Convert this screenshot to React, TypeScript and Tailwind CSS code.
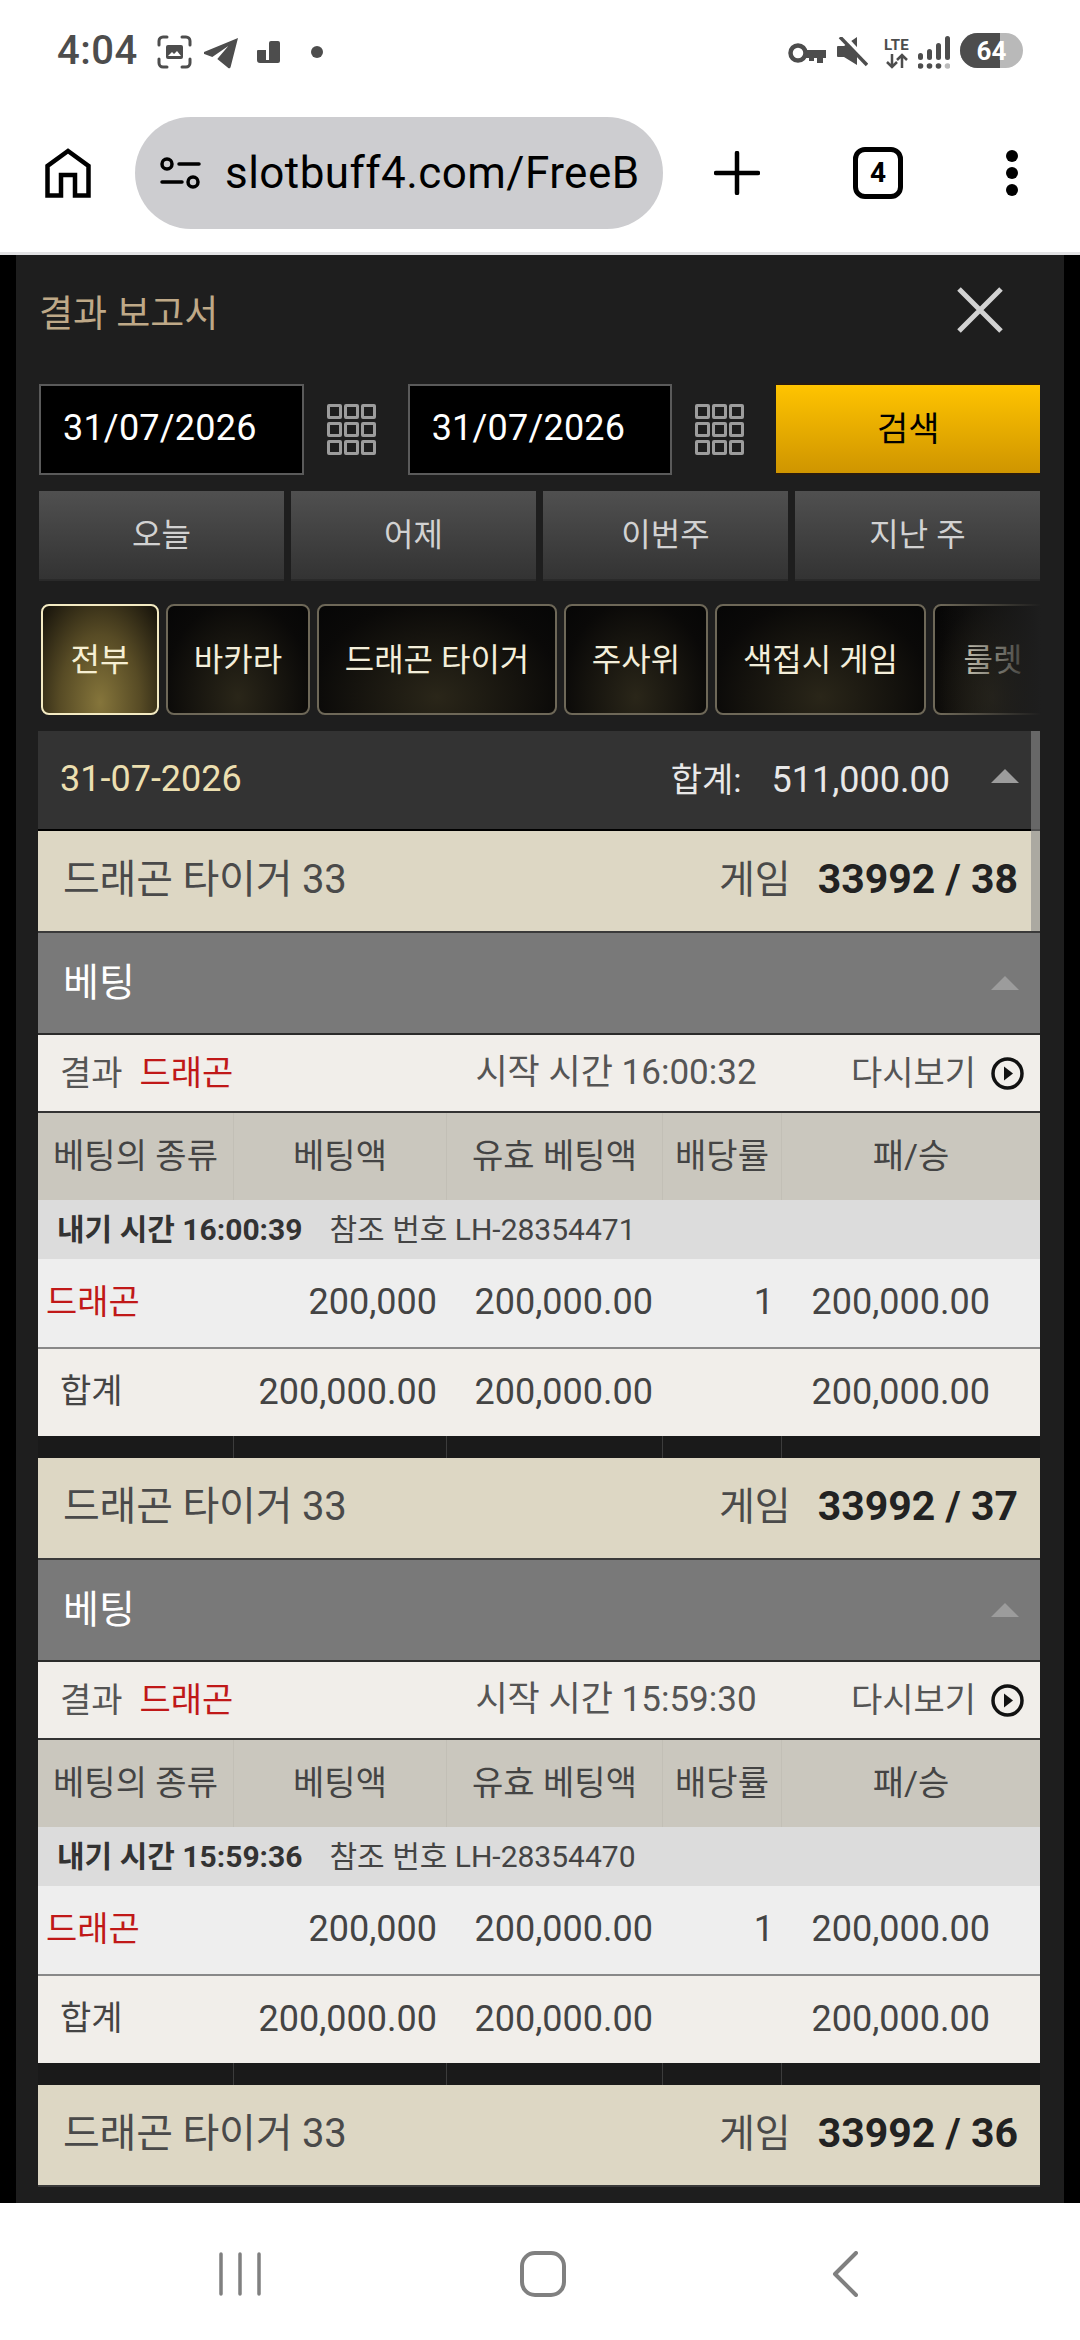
const groups = [
  { round: '33992 / 38', start: '16:00:32', bet: '16:00:39', ref: 'LH-28354471', open: true },
  { round: '33992 / 37', start: '15:59:30', bet: '15:59:36', ref: 'LH-28354470', open: true },
  { round: '33992 / 36', start: '', bet: '', ref: '', open: false },
];

const columns = 'grid grid-cols-[196px_213px_216px_119px_258px]';

function StatusBar() {
  return (
    <div className="h-[100px] flex items-start pt-[33px] pl-[57px] pr-[57px] text-[#4d4d4d] bg-white">
      <span className="text-[40px] leading-[36px] font-medium w-[100px] tracking-[0.5px]">4:04</span>
      <svg className="w-[35px] h-[34px] mt-[2px]" viewBox="0 0 35 34" fill="none" stroke="currentColor" strokeWidth="3" strokeLinecap="round">
        <path d="M2 10V6a4 4 0 0 1 4-4h4M25 2h4a4 4 0 0 1 4 4v4M33 24v4a4 4 0 0 1-4 4h-4M10 32H6a4 4 0 0 1-4-4v-4" />
        <rect x="9" y="10" width="17" height="14" rx="2" fill="currentColor" stroke="none" />
        <path d="M11 21l4-4 2 2 3-3 4 5z" fill="#fff" stroke="none" />
      </svg>
      <svg className="w-[35px] h-[31px] mt-[5px] ml-[12px]" viewBox="0 0 35 31" fill="currentColor">
        <path d="M34 0 0 14c-1 .6-1 1.6.3 2l8 3 16-11-11 13 11 9c1 .6 2 0 2.300-1z" />
      </svg>
      <svg className="w-[23px] h-[22px] mt-[8px] ml-[18px]" viewBox="0 0 23 22" fill="currentColor">
        <path d="M12 2a2 2 0 0 1 2-2h7a2 2 0 0 1 2 2v18a2 2 0 0 1-2 2H3a3 3 0 0 1-3-3V10a1 1 0 0 1 1-1h8v10h3z" />
      </svg>
      <span className="w-[12px] h-[12px] rounded-full bg-[#4d4d4d] mt-[13px] ml-[31px]" />
      <span className="flex-1" />
      <svg className="w-[38px] h-[20px] mt-[10px]" viewBox="0 0 38 20" fill="none" stroke="currentColor">
        <circle cx="10" cy="10" r="7.500" strokeWidth="4.500" />
        <path d="M17 7h21v8h-3v5h-6v-5h-3v3h-5v-3h-4z" fill="currentColor" stroke="none" />
      </svg>
      <svg className="w-[31px] h-[30px] mt-[4px] ml-[11px]" viewBox="0 0 31 30" fill="currentColor">
        <path d="M0 10a1 1 0 0 1 1-1h6L20 0v28L7 20H1a1 1 0 0 1-1-1z" />
        <path d="M6 -2 32 26" stroke="#fff" strokeWidth="4" fill="none" />
        <path d="M3 0 30 28" stroke="currentColor" strokeWidth="3.500" fill="none" />
      </svg>
      <div className="w-[31px] h-[33px] mt-[4px] ml-[13px] flex flex-col items-center">
        <span className="text-[15px] leading-[16px] font-bold tracking-[0.2px]">LTE</span>
        <svg className="w-[24px] h-[16px]" viewBox="0 0 24 16" fill="none" stroke="currentColor" strokeWidth="2.500">
          <path d="M7 1v13M2 9l5 5 5-5M17 15V2M12 7l5-5 5 5" />
        </svg>
      </div>
      <svg className="w-[32px] h-[33px] mt-[3px] ml-[6px]" viewBox="0 0 32 33" fill="currentColor">
        <rect x="0" y="17" width="5" height="7" rx="2.500" />
        <rect x="9" y="13" width="5" height="11" rx="2.500" />
        <rect x="18" y="7" width="5" height="17" rx="2.500" />
        <rect x="27" y="0" width="5" height="24" rx="2.500" />
        <circle cx="2.500" cy="30" r="2.800" />
        <circle cx="11.500" cy="30" r="2.800" />
        <circle cx="20.500" cy="30" r="2.800" />
        <circle cx="29.500" cy="30" r="2.800" fill="#bbb" />
      </svg>
      <div className="relative w-[63px] h-[35px] ml-[10px] rounded-full overflow-hidden bg-[#b9b9b9] flex items-center justify-center">
        <span className="absolute left-0 top-0 bottom-0 w-[40px] bg-[#4d4d4d]" />
        <span className="relative text-white text-[26px] leading-none font-bold">64</span>
      </div>
    </div>
  );
}

function Toolbar() {
  return (
    <div className="h-[155px] bg-white border-b-[3px] border-[#e2e2e4] flex items-start pt-[17px]">
      <svg className="w-[46px] h-[50px] ml-[45px] mt-[31px]" viewBox="0 0 46 50" fill="none" stroke="#000" strokeWidth="4.500">
        <path d="M2.500 47.500V18L23 3l20.500 15v29.500H30V27H16v20.500z" strokeLinejoin="miter" />
      </svg>
      <div className="w-[528px] h-[112px] ml-[44px] rounded-full bg-[#cdcdd0] flex items-center pl-[25px] overflow-hidden">
        <svg className="w-[41px] h-[33px] shrink-0" viewBox="0 0 41 33" fill="none" stroke="#000" strokeWidth="3.500" strokeLinecap="round">
          <circle cx="7" cy="7" r="5" />
          <path d="M19 7h20M2 25h20" />
          <circle cx="33" cy="25" r="5" />
        </svg>
        <span className="ml-[24px] text-[44px] leading-none text-black whitespace-nowrap tracking-[0.45px]">slotbuff4.com/FreeB</span>
      </div>
      <svg className="w-[46px] h-[44px] ml-[51px] mt-[34px]" viewBox="0 0 46 44" fill="none" stroke="#000" strokeWidth="4.500" strokeLinecap="round">
        <path d="M23 2v40M2 22h42" />
      </svg>
      <div className="w-[50px] h-[52px] ml-[93px] mt-[30px] rounded-[12px] border-[5px] border-black flex items-center justify-center text-[28px] font-bold leading-none text-black">4</div>
      <div className="ml-[103px] mt-[33px] flex flex-col gap-[5px]">
        <span className="w-[12px] h-[12px] rounded-full bg-black" />
        <span className="w-[12px] h-[12px] rounded-full bg-black" />
        <span className="w-[12px] h-[12px] rounded-full bg-black" />
      </div>
    </div>
  );
}

function GridIcon() {
  return (
    <div className="grid grid-cols-3 gap-x-[2px] gap-y-[3px] w-[49px] shrink-0">
      {Array.from({ length: 9 }).map((_, i) => (
        <span key={i} className="h-[15px] rounded-[2px] border-[3px] border-[#9c9c9c]" />
      ))}
    </div>
  );
}

function Triangle() {
  return <span className="w-0 h-0 border-x-[14px] border-x-transparent border-b-[14px] border-b-[#9c9c9c]" />;
}

function GameRow({ round }: { round: string }) {
  return (
    <div className="h-[102px] bg-[#ddd7c4] border-b-2 border-[#3a3a3a] flex items-center pl-[25px] pr-[22px] pb-[2px]">
      <span className="text-[40px] text-[#4a4a4a] tracking-[-0.2px]">드래곤 타이거 33</span>
      <span className="flex-1" />
      <span className="text-[39px] text-[#4a4a4a]">게임</span>
      <span className="ml-[27px] text-[41px] font-bold text-[#222]">{round}</span>
    </div>
  );
}

function Group({ round, start, bet, ref, open }: (typeof groups)[number]) {
  return (
    <div>
      <GameRow round={round} />
      {open && (
        <>
          <div className="h-[102px] bg-[#797979] border-b-2 border-[#2b2b2b] flex items-center justify-between pl-[25px] pr-[21px]">
            <span className="text-[39px] text-white">베팅</span>
            <Triangle />
          </div>
          <div className="h-[78px] bg-[#f1eeea] border-b-2 border-[#333] flex items-center pl-[22px] pr-[16px] text-[34px] text-[#555]">
            <span>결과</span>
            <span className="ml-[17px] text-[#c01818]">드래곤</span>
            <span className="ml-[242px] text-[35px]">시작 시간 {start}</span>
            <span className="flex-1" />
            <span>다시보기</span>
            <svg className="w-[33px] h-[33px] ml-[15px]" viewBox="0 0 33 33" fill="none">
              <circle cx="16.500" cy="16.500" r="14.500" stroke="#111" strokeWidth="3.500" />
              <path d="M13 9.500 22 16.500 13 23.500z" fill="#111" />
            </svg>
          </div>
          <div className={`${columns} h-[87px] bg-[#cac7be] text-[34px] text-[#444]`}>
            {['베팅의 종류', '베팅액', '유효 베팅액', '배당률', '패/승'].map((label, i) => (
              <div key={label} className={`flex items-center justify-center whitespace-nowrap ${i < 4 ? 'border-r border-[#c2bfb6]' : ''}`}>
                {label}
              </div>
            ))}
          </div>
          <div className="h-[59px] bg-[#dcdcdc] flex items-center pl-[19px] text-[30px] text-[#444]">
            <span className="font-bold text-[#333]">내기 시간 {bet}</span>
            <span className="ml-[27px]">참조 번호 {ref}</span>
          </div>
          <div className={`${columns} h-[90px] bg-[#eeeeee] border-b-2 border-[#888] text-[36px] text-[#444] pb-[2px]`}>
            <div className="flex items-center pl-[8px] text-[34px] text-[#c01818]">드래곤</div>
            <div className="flex items-center justify-end pr-[10px]">200,000</div>
            <div className="flex items-center justify-end pr-[10px]">200,000.00</div>
            <div className="flex items-center justify-end pr-[8px]">1</div>
            <div className="flex items-center justify-end pr-[50px]">200,000.00</div>
          </div>
          <div className={`${columns} h-[87px] bg-[#f1eeea] text-[36px] text-[#444] pb-[2px]`}>
            <div className="flex items-center pl-[22px] text-[34px]">합계</div>
            <div className="flex items-center justify-end pr-[10px]">200,000.00</div>
            <div className="flex items-center justify-end pr-[10px]">200,000.00</div>
            <div />
            <div className="flex items-center justify-end pr-[50px]">200,000.00</div>
          </div>
          <div className={`${columns} h-[22px] bg-[#1a1a1a]`}>
            <div className="border-r border-[#3c3c3c]" />
            <div className="border-r border-[#3c3c3c]" />
            <div className="border-r border-[#3c3c3c]" />
            <div className="border-r border-[#3c3c3c]" />
            <div />
          </div>
        </>
      )}
    </div>
  );
}

export default function App() {
  const tabs = [
    { label: '바카라', w: 'w-[144px]' },
    { label: '드래곤 타이거', w: 'w-[240px]' },
    { label: '주사위', w: 'w-[144px]' },
    { label: '색접시 게임', w: 'w-[211px]' },
    { label: '룰렛', w: 'w-[120px]' },
  ];

  return (
    <div className="w-[1080px] h-[2340px] overflow-hidden flex flex-col bg-white font-['Roboto','Noto_Sans_CJK_KR',sans-serif]">
      <StatusBar />
      <Toolbar />

      <div className="flex-1 min-h-0 bg-black px-[16px]">
        <div className="h-full bg-[#1e1e1e] pl-[23px] pr-[24px] overflow-hidden">
          {/* title */}
          <div className="h-[128px] flex items-start justify-between">
            <span className="mt-[38px] text-[37px] leading-[44px] text-[#bfa988]">결과 보고서</span>
            <svg className="w-[46px] h-[46px] mt-[32px] mr-[37px]" viewBox="0 0 46 46" stroke="#d2d2d2" strokeWidth="5">
              <path d="M2 2l42 42M44 2 2 44" />
            </svg>
          </div>

          {/* date search */}
          <div className="flex items-center h-[92px]">
            <div className="w-[265px] h-[91px] bg-black border-2 border-[#5a5a5a] flex items-center pl-[22px] pb-[2px] text-[36px] tracking-[0.2px] text-white">31/07/2026</div>
            <div className="ml-[23px]"><GridIcon /></div>
            <div className="ml-[32px] w-[265px] h-[91px] bg-black border-2 border-[#5a5a5a] flex items-center pl-[22px] pb-[2px] text-[36px] tracking-[0.2px] text-white">31/07/2026</div>
            <div className="ml-[23px]"><GridIcon /></div>
            <div className="ml-[32px] w-[264px] h-[92px] border-y-2 border-[#2a1c10] bg-gradient-to-b from-[#ffc400] to-[#cf9500] flex items-center justify-center text-[34px] text-black">검색</div>
          </div>

          {/* quick ranges */}
          <div className="mt-[16px] grid grid-cols-4 gap-[7px]">
            {['오늘', '어제', '이번주', '지난 주'].map((label) => (
              <div key={label} className="h-[90px] bg-gradient-to-b from-[#505050] to-[#333333] border-b-2 border-[#2a2a2a] flex items-center justify-center text-[32px] text-[#d2d2d2]">
                {label}
              </div>
            ))}
          </div>

          {/* game tabs */}
          <div className="relative mt-[23px] h-[111px] overflow-hidden w-[1002px] flex gap-[7px] pl-[2px]">
            <div className="w-[118px] shrink-0 rounded-[8px] border-2 border-[#f3eac2] bg-[radial-gradient(ellipse_at_50%_90%,#85753b_0%,#574b25_50%,#14110a_100%)] flex items-center justify-center text-[32px] text-[#f6efd3]">
              전부
            </div>
            {tabs.map((tab) => (
              <div key={tab.label} className={`${tab.w} shrink-0 rounded-[8px] border-2 border-[#6e6858] bg-[radial-gradient(ellipse_at_50%_85%,#2a2619_0%,#0a0908_75%,#060606_100%)] flex items-center justify-center text-[32px] text-[#f3eeda]`}>
                {tab.label}
              </div>
            ))}
            <span className="absolute right-0 top-0 bottom-0 w-[100px] bg-gradient-to-r from-transparent to-[#1e1e1e]" />
          </div>

          {/* report */}
          <div className="relative mt-[16px] -ml-[1px]">
            <div className="h-[100px] bg-[#333333] border-b-2 border-black flex items-center pl-[22px] pr-[21px]">
              <span className="text-[36px] text-[#ecdfb0] pb-[2px]">31-07-2026</span>
              <span className="flex-1" />
              <span className="text-[34px] text-[#e8e8e8]">합계:</span>
              <span className="ml-[30px] text-[36px] text-[#e8e8e8]">511,000.00</span>
              <span className="ml-[41px] mb-[8px] flex"><Triangle /></span>
            </div>
            {groups.map((group) => (
              <Group key={group.round} {...group} />
            ))}
            <span className="absolute right-0 top-0 h-[200px] w-[9px] bg-[#8a8a8a]/60" />
          </div>
        </div>
      </div>

      {/* android nav */}
      <div className="h-[137px] shrink-0 bg-white flex items-start pt-[49px] pl-[219px]">
        <svg className="w-[42px] h-[44px]" viewBox="0 0 42 44" stroke="#808080" strokeWidth="3.500" strokeLinecap="round">
          <path d="M2 2v40M21 2v40M40 2v40" />
        </svg>
        <svg className="w-[46px] h-[46px] ml-[259px] -mt-[1px]" viewBox="0 0 46 46" fill="none" stroke="#808080" strokeWidth="4">
          <rect x="2" y="2" width="42" height="42" rx="13" />
        </svg>
        <svg className="w-[26px] h-[46px] ml-[266px] -mt-[1px]" viewBox="0 0 26 46" fill="none" stroke="#808080" strokeWidth="4" strokeLinecap="round" strokeLinejoin="round">
          <path d="M24 2 3 23l21 21" />
        </svg>
      </div>
    </div>
  );
}
